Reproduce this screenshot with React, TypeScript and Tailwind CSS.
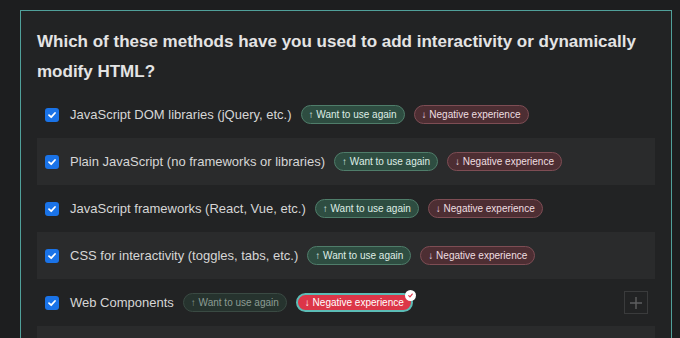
import React from 'react';

interface Method {
  label: string;
  selected?: 'negative';
}

const methods: Method[] = [
  { label: 'JavaScript DOM libraries (jQuery, etc.)' },
  { label: 'Plain JavaScript (no frameworks or libraries)' },
  { label: 'JavaScript frameworks (React, Vue, etc.)' },
  { label: 'CSS for interactivity (toggles, tabs, etc.)' },
  { label: 'Web Components', selected: 'negative' },
];

const Check = () => (
  <span className="flex h-[14px] w-[14px] shrink-0 items-center justify-center rounded-[3px] bg-[#1a73e8]">
    <svg width="10" height="10" viewBox="0 0 10 10" fill="none">
      <path d="M2 5.2 L4.2 7.2 L8 3" stroke="white" strokeWidth="1.8" strokeLinecap="round" strokeLinejoin="round" />
    </svg>
  </span>
);

const MethodRow = ({ method, striped }: { method: Method; striped: boolean }) => {
  const neg = method.selected === 'negative';
  return (
    <div className={`flex h-[47px] items-center pl-2 pr-2 ${striped ? 'bg-[#2a2b2c]' : ''}`}>
      <Check />
      <span className="ml-[11px] text-[13px] text-[#d6d6d6]">{method.label}</span>
      <div className="ml-[9px] flex items-center gap-[9px]">
        <span
          className={`rounded-full border px-[7px] py-[2px] text-[10px] leading-[13px] ${
            neg ? 'border-[#3a4a43] bg-[#26332e] text-[#8c9c94]' : 'border-[#4f7d6a] bg-[#2e4d41] text-[#dfeee6]'
          }`}
        >
          ↑ Want to use again
        </span>
        {neg ? (
          <span className="relative rounded-full border-2 border-[#5cbcb6] bg-[#dc3648] px-[7px] py-[1px] text-[10px] leading-[13px] text-white">
            ↓ Negative experience
            <span className="absolute -right-[5px] -top-[5px] flex h-[11px] w-[11px] items-center justify-center rounded-full bg-white">
              <svg width="7" height="7" viewBox="0 0 8 8" fill="none">
                <path d="M2 4.2 L3.4 5.6 L6 2.4" stroke="#dc3648" strokeWidth="1.4" strokeLinecap="round" strokeLinejoin="round" />
              </svg>
            </span>
          </span>
        ) : (
          <span className="rounded-full border border-[#7e4d54] bg-[#4d2e33] px-[7px] py-[2px] text-[10px] leading-[13px] text-[#efdfe1]">
            ↓ Negative experience
          </span>
        )}
      </div>
      {neg && (
        <button className="ml-auto mr-[-1px] flex h-[23px] w-[24px] items-center justify-center border border-[#3a3b3c]">
          <svg width="14" height="14" viewBox="0 0 14 14">
            <path d="M7 1 V13 M1 7 H13" stroke="#5e5f60" strokeWidth="1.4" />
          </svg>
        </button>
      )}
    </div>
  );
};

export default function App() {
  return (
    <div className="h-[338px] overflow-hidden bg-[#1d1e1f] pl-5 pr-2 pt-[10px]" style={{ fontFamily: '"Liberation Sans", Arial, sans-serif' }}>
      <div className="w-[652px] border border-[#50a09a] bg-[#222324] pl-4 pr-4 pt-[16px] pb-10">
        <h2 className="text-[17px] font-bold leading-[30px] text-[#e4e4e4]">
          Which of these methods have you used to add interactivity or dynamically modify HTML?
        </h2>
        <div className="mt-[4px]">
          {methods.map((m, i) => (
            <MethodRow key={m.label} method={m} striped={i % 2 === 1} />
          ))}
          {/* next option row, scrolled below the fold */}
          <div className="h-[47px] bg-[#2a2b2c]" />
        </div>
      </div>
    </div>
  );
}
